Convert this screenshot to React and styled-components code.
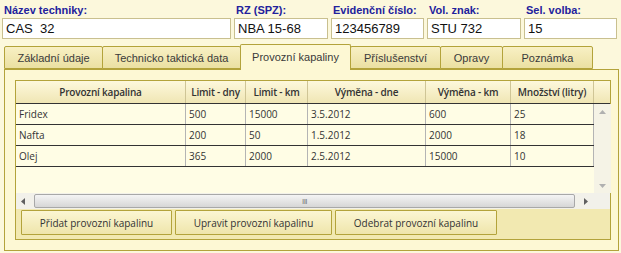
import React from 'react';
import styled, { createGlobalStyle } from 'styled-components';

const GlobalStyle = createGlobalStyle`
  html, body {
    margin: 0;
    padding: 0;
    background: #fcf8dc;
  }
  * { box-sizing: border-box; }
`;

const fields = [
  { label: 'Název techniky:', value: 'CAS  32', width: 229 },
  { label: 'RZ (SPZ):', value: 'NBA 15-68', width: 94 },
  { label: 'Evidenční číslo:', value: '123456789', width: 93 },
  { label: 'Vol. znak:', value: 'STU 732', width: 94 },
  { label: 'Sel. volba:', value: '15', width: 93 },
];

const tabs = [
  { name: 'Základní údaje', width: 99 },
  { name: 'Technicko taktická data', width: 139 },
  { name: 'Provozní kapaliny', width: 111, active: true },
  { name: 'Příslušenství', width: 91 },
  { name: 'Opravy', width: 63 },
  { name: 'Poznámka', width: 91 },
];

const columns = [
  { title: 'Provozní kapalina', width: 170 },
  { title: 'Limit - dny', width: 60 },
  { title: 'Limit - km', width: 62 },
  { title: 'Výměna - dne', width: 118 },
  { title: 'Výměna - km', width: 85 },
  { title: 'Množství (litry)', width: 83 },
];

const rows = [
  ['Fridex', '500', '15000', '3.5.2012', '600', '25'],
  ['Nafta', '200', '50', '1.5.2012', '2000', '18'],
  ['Olej', '365', '2000', '2.5.2012', '15000', '10'],
];

const App = () => {
  return (
    <Page>
      <GlobalStyle />
      <FieldRow>
        {fields.map((f) => (
          <Field key={f.label} $width={f.width}>
            <Label>{f.label}</Label>
            <Input readOnly value={f.value} />
          </Field>
        ))}
      </FieldRow>

      <TabList>
        {tabs.map((t) => (
          <Tab key={t.name} $width={t.width} $active={t.active}>
            {t.name}
          </Tab>
        ))}
      </TabList>

      <Panel>
        <Inner>
          <Grid>
            <HeaderRow>
              {columns.map((c) => (
                <HeaderCell key={c.title} $width={c.width}>{c.title}</HeaderCell>
              ))}
              <HeaderFiller />
            </HeaderRow>
            <Body>
              <Rows>
                {rows.map((r) => (
                  <Row key={r[0]}>
                    {r.map((v, i) => (
                      <Cell key={i} $width={columns[i].width}>{v}</Cell>
                    ))}
                  </Row>
                ))}
              </Rows>
              <VScroll>
                <Arrow viewBox="0 0 7 4"><path d="M0 4 L3.5 0 L7 4 Z" /></Arrow>
                <Arrow viewBox="0 0 7 4"><path d="M0 0 L3.5 4 L7 0 Z" /></Arrow>
              </VScroll>
            </Body>
            <HScrollRow>
              <HScroll>
                <ArrowH viewBox="0 0 4 7"><path d="M4 0 L0 3.5 L4 7 Z" /></ArrowH>
                <Thumb>
                  <Grip>III</Grip>
                </Thumb>
                <ArrowH viewBox="0 0 4 7"><path d="M0 0 L4 3.5 L0 7 Z" /></ArrowH>
              </HScroll>
              <Corner />
            </HScrollRow>
          </Grid>
          <ButtonRow>
            <Button $width={151}>Přidat provozní kapalinu</Button>
            <Button $width={157}>Upravit provozní kapalinu</Button>
            <Button $width={162}>Odebrat provozní kapalinu</Button>
          </ButtonRow>
        </Inner>
      </Panel>
    </Page>
  );
};

const Page = styled.div`
  width: 621px;
  height: 253px;
  padding: 4px 2px 0 2px;
  font-family: "Liberation Sans", Arial, sans-serif;
`;

const FieldRow = styled.div`
  display: flex;
  gap: 3px;
`;

const Field = styled.div`
  display: flex;
  flex-direction: column;
  width: ${(p) => p.$width}px;
`;

const Label = styled.div`
  height: 14px;
  padding-left: 2px;
  font-size: 11px;
  font-weight: bold;
  line-height: 13px;
  color: #22229c;
`;

const Input = styled.input`
  height: 21px;
  width: 100%;
  margin: 0;
  padding: 0 3px;
  border: 1px solid #c9c08f;
  background: #fff;
  font-family: "Liberation Sans", Arial, sans-serif;
  font-size: 13px;
  color: #111;
  outline: none;
`;

const TabList = styled.div`
  display: flex;
  align-items: flex-end;
  height: 25px;
  margin-top: 5px;
  padding-left: 2px;
  position: relative;
  z-index: 1;
`;

const Tab = styled.div`
  width: ${(p) => p.$width}px;
  height: ${(p) => (p.$active ? 26 : 23)}px;
  margin-right: -1px;
  margin-bottom: ${(p) => (p.$active ? -1 : 0)}px;
  display: flex;
  align-items: center;
  justify-content: center;
  padding-bottom: ${(p) => (p.$active ? 2 : 0)}px;
  border: 1px solid #b3a33b;
  border-bottom: ${(p) => (p.$active ? 'none' : '1px solid #b3a33b')};
  border-radius: 2px 2px 0 0;
  background: ${(p) =>
    p.$active ? '#fdf8d4' : 'linear-gradient(#f8f0c4, #ebe0a2)'};
  font-size: 11px;
  color: #3a3a3a;
`;

const Panel = styled.div`
  width: 615px;
  height: 182px;
  margin-left: 2px;
  padding: 10px 7px 10px 10px;
  border: 1px solid #b3a33b;
  background: #fdf8d4;
`;

const Inner = styled.div`
  height: 100%;
  border: 1px solid #b3a33b;
  background: #f2e9b1;
  display: flex;
  flex-direction: column;
`;

const Grid = styled.div`
  height: 128px;
  background: #fffde5;
  display: flex;
  flex-direction: column;
  font-family: "Open Sans", "Noto Sans", sans-serif;
`;

const HeaderRow = styled.div`
  display: flex;
  height: 23px;
  border-bottom: 1px solid #333;
  background: linear-gradient(#fdf8dc, #f0e6b4);
`;

const HeaderCell = styled.div`
  width: ${(p) => p.$width}px;
  flex: none;
  display: flex;
  align-items: center;
  justify-content: center;
  border-right: 1px solid #cfc596;
  font-size: 10px;
  font-weight: 600;
  letter-spacing: -0.2px;
  color: #333;
`;

const HeaderFiller = styled.div`
  flex: 1;
`;

const Body = styled.div`
  flex: 1;
  display: flex;
  min-height: 0;
`;

const Rows = styled.div`
  flex: 1;
  display: flex;
  flex-direction: column;
`;

const Row = styled.div`
  display: flex;
  height: 21px;
  border-bottom: 1px solid #333;
`;

const Cell = styled.div`
  width: ${(p) => p.$width}px;
  flex: none;
  display: flex;
  align-items: center;
  padding-left: 3px;
  border-right: 1px solid #b4b4b4;
  font-size: 10px;
  color: #333;
`;

const VScroll = styled.div`
  width: 17px;
  flex: none;
  display: flex;
  flex-direction: column;
  justify-content: space-between;
  align-items: center;
  padding: 6px 0 5px;
  background: #f5f3e6;
`;

const Arrow = styled.svg`
  width: 7px;
  height: 4px;
  fill: #b0b0b0;
`;

const HScrollRow = styled.div`
  display: flex;
  height: 16px;
`;

const HScroll = styled.div`
  flex: 1;
  display: flex;
  align-items: center;
  padding: 0 5px;
  gap: 9px;
  background: #f2f1ea;
`;

const ArrowH = styled.svg`
  width: 4px;
  height: 7px;
  fill: #606060;
  flex: none;
`;

const Thumb = styled.div`
  flex: 1;
  height: 14px;
  border: 1px solid #a8a8a8;
  border-radius: 2px;
  background: linear-gradient(#f4f4f4, #d6d6d6);
  display: flex;
  align-items: center;
  justify-content: center;
`;

const Grip = styled.span`
  font-family: "Liberation Sans", Arial, sans-serif;
  font-size: 8px;
  letter-spacing: -0.5px;
  color: #777;
`;

const Corner = styled.div`
  width: 17px;
  background: #f2f1ea;
`;

const ButtonRow = styled.div`
  display: flex;
  gap: 3px;
  padding: 1px 5px;
`;

const Button = styled.button`
  width: ${(p) => p.$width}px;
  height: 25px;
  margin: 0;
  border: 1px solid #b3a33b;
  border-radius: 1px;
  background: linear-gradient(#fbf6d3, #efe5ab);
  font-family: "Open Sans", "Noto Sans", sans-serif;
  font-size: 10px;
  color: #333;
  padding: 0;
`;

export default App;
